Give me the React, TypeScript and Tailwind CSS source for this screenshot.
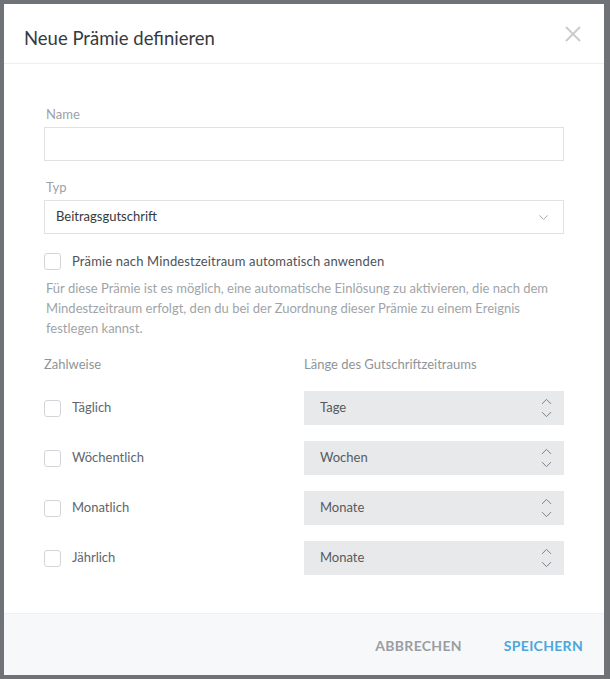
import { ChevronDown, ChevronUp, X } from 'lucide-react';

const font = { fontFamily: 'Lato, "Open Sans", sans-serif' };

const rows = [
  { label: 'Täglich', unit: 'Tage' },
  { label: 'Wöchentlich', unit: 'Wochen' },
  { label: 'Monatlich', unit: 'Monate' },
  { label: 'Jährlich', unit: 'Monate' },
];

function Checkbox() {
  return <span className="block w-[17px] h-[17px] shrink-0 rounded-[3px] border border-[#d3d6d9] bg-white" />;
}

function Spinner({ value }: { value: string }) {
  return (
    <div className="flex items-center justify-between h-[34px] bg-[#e8e9eb] pl-4 pr-[9px] text-[13px] text-[#555b61]">
      <span>{value}</span>
      <div className="flex flex-col items-center text-[#7a7f84]">
        <ChevronUp className="w-[17px] h-[17px] -mb-[2px]" strokeWidth={1.4} />
        <ChevronDown className="w-[17px] h-[17px] -mt-[2px]" strokeWidth={1.4} />
      </div>
    </div>
  );
}

export default function App() {
  return (
    <div className="w-[610px] h-[679px] bg-[#6f7276] p-1" style={font}>
      <div className="w-[600px] h-[671px] bg-white flex flex-col">
        {/* Header */}
        <div className="h-[60px] flex items-center justify-between pl-5 pr-[18px] border-b border-[#eceef0]">
          <h2 className="text-[18.5px] text-[#343a40] pt-[10px]">Neue Prämie definieren</h2>
          <X className="w-[26px] h-[26px] text-[#c9ccd0] mt-[1px]" strokeWidth={1.8} />
        </div>

        {/* Body */}
        <div className="flex-1 px-10 pt-[42px]">
          <label className="block pl-[2px] text-[13px] text-[#9da2a6] leading-4">Name</label>
          <div className="mt-[5px] h-[34px] border border-[#dfe2e5]" />

          <label className="block mt-[18px] pl-[2px] text-[13px] text-[#9da2a6] leading-4">Typ</label>
          <div className="mt-[5px] h-[34px] border border-[#dfe2e5] flex items-center justify-between pl-[11px] pr-[12px] text-[13px] text-[#333a40]">
            <span>Beitragsgutschrift</span>
            <ChevronDown className="w-[15px] h-[15px] text-[#9da2a6]" strokeWidth={1.5} />
          </div>

          <div className="mt-[18px] flex items-center gap-[11px]">
            <Checkbox />
            <span className="text-[13px] tracking-[0.15px] text-[#4c5258]">Prämie nach Mindestzeitraum automatisch anwenden</span>
          </div>
          <p className="mt-[6px] pl-[2px] text-[13px] leading-5 text-[#a0a4a8]">
            Für diese Prämie ist es möglich, eine automatische Einlösung zu aktivieren, die nach dem Mindestzeitraum erfolgt, den du bei der Zuordnung dieser Prämie zu einem Ereignis festlegen kannst.
          </p>

          <div className="mt-[17px] grid grid-cols-2">
            <span className="text-[13px] text-[#8f9499]">Zahlweise</span>
            <span className="text-[13px] text-[#8f9499]">Länge des Gutschriftzeitraums</span>
          </div>

          <div className="mt-[17px] flex flex-col gap-4">
            {rows.map((r) => (
              <div key={r.label} className="grid grid-cols-2">
                <div className="flex items-center gap-[11px]">
                  <Checkbox />
                  <span className="text-[13px] text-[#60666c]">{r.label}</span>
                </div>
                <Spinner value={r.unit} />
              </div>
            ))}
          </div>
        </div>

        {/* Footer */}
        <div className="h-[62px] bg-[#f7f8fa] border-t border-[#eef0f2] flex items-center justify-end gap-[42px] pr-[21px] pt-[2px]">
          <button className="text-[14px] font-bold tracking-[0.3px] text-[#9a9ea2]">ABBRECHEN</button>
          <button className="text-[14px] font-bold tracking-[0.3px] text-[#4ba7dc]">SPEICHERN</button>
        </div>
      </div>
    </div>
  );
}
